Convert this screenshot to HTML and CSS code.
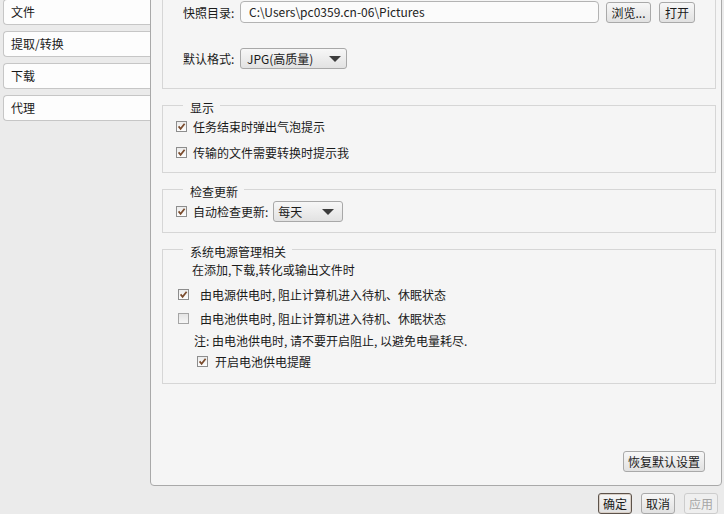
FILE: index.html
```html
<!DOCTYPE html>
<html>
<head>
<meta charset="UTF-8">
<title>设置</title>
<link rel="stylesheet" href="styles.css">
</head>
<body>
<div class="window">
    <ul class="tabs">
        <li>文件</li>
        <li>提取/转换</li>
        <li>下载</li>
        <li>代理</li>
    </ul>
    <div class="panel">
        <fieldset class="group files">
            <div class="row">
                <span class="label">快照目录:</span>
                <span class="input">C:\Users\pc0359.cn-06\Pictures</span>
                <button class="btn browse">浏览...</button>
                <button class="btn open">打开</button>
            </div>
            <div class="row row-format">
                <span class="label">默认格式:</span>
                <span class="select fmt">JPG(高质量)<i class="arrow"></i></span>
            </div>
        </fieldset>

        <fieldset class="group">
            <legend>显示</legend>
            <label class="check"><span class="cb"><svg viewBox="0 0 9 9" width="9" height="9"><path d="M1.6 4.4 L3.6 6.8 L7.6 1.8"/></svg></span>任务结束时弹出气泡提示</label>
            <label class="check second"><span class="cb"><svg viewBox="0 0 9 9" width="9" height="9"><path d="M1.6 4.4 L3.6 6.8 L7.6 1.8"/></svg></span>传输的文件需要转换时提示我</label>
        </fieldset>

        <fieldset class="group">
            <legend>检查更新</legend>
            <div class="check update">
                <span class="cb"><svg viewBox="0 0 9 9" width="9" height="9"><path d="M1.6 4.4 L3.6 6.8 L7.6 1.8"/></svg></span>
                <span>自动检查更新:</span>
                <span class="select freq">每天<i class="arrow"></i></span>
            </div>
        </fieldset>

        <fieldset class="group power">
            <legend>系统电源管理相关</legend>
            <div class="line intro">在添加,下载,转化或输出文件时</div>
            <label class="check ac"><span class="cb"><svg viewBox="0 0 9 9" width="9" height="9"><path d="M1.6 4.4 L3.6 6.8 L7.6 1.8"/></svg></span>由电源供电时, 阻止计算机进入待机、休眠状态</label>
            <label class="check battery"><span class="cb off"></span>由电池供电时, 阻止计算机进入待机、休眠状态</label>
            <div class="line note">注: 由电池供电时, 请不要开启阻止, 以避免电量耗尽.</div>
            <label class="check remind"><span class="cb"><svg viewBox="0 0 9 9" width="9" height="9"><path d="M1.6 4.4 L3.6 6.8 L7.6 1.8"/></svg></span>开启电池供电提醒</label>
        </fieldset>

        <div class="panel-foot">
            <button class="btn restore">恢复默认设置</button>
        </div>
    </div>
</div>
<div class="footer">
    <button class="btn default">确定</button>
    <button class="btn">取消</button>
    <button class="btn" disabled>应用</button>
</div>
</body>
</html>
```

FILE: styles.css
```css
*{
    box-sizing: border-box;
}
body{
    margin: 0;
    width: 724px;
    height: 514px;
    overflow: hidden;
    background: #ebebeb;
    font: 12px "Noto Sans CJK SC", sans-serif;
    color: #1a1a1a;
}
.window{
    display: flex;
    height: 486px;
}

/* left tab list */
.tabs{
    list-style: none;
    margin: -1px 0 0 3px;
    padding: 0;
    width: 147px;
}
.tabs li{
    height: 26px;
    line-height: 24px;
    margin-bottom: 6px;
    padding-left: 7px;
    background: #fdfdfd;
    border: 1px solid #c6c6c6;
    border-right: 0;
    border-radius: 4px 0 0 4px;
}

/* right page */
.panel{
    flex: 1;
    margin: -20px 2px 0 0;
    padding: 7px 5px 0 11px;
    background: #f5f5f5;
    border: 1px solid #a9a9a9;
    border-radius: 0 0 4px 4px;
    display: flex;
    flex-direction: column;
}
.group{
    margin: 7px 0 0;
    padding: 1px 0 10px 13px;
    min-width: 0;
    border: 1px solid #d6d6d6;
}
.group legend{
    margin-left: 7px;
    padding: 5px 6px 0 7px;
    line-height: 14px;
}
.group.files{
    margin-top: 0;
    padding: 12px 20px 19px 20px;
}
.row{
    display: flex;
    align-items: center;
    height: 22px;
}
.row-format{
    margin-top: 24px;
}
.label{
    width: 57px;
    flex: none;
}
.input{
    flex: 1;
    height: 22px;
    line-height: 20px;
    padding-left: 8px;
    margin-right: 7px;
    background: #fbfbfb;
    border: 1px solid #b3b3b3;
    border-radius: 4px;
    color: #222;
}
.select{
    position: relative;
    height: 21px;
    line-height: 19px;
    padding-left: 6px;
    background: linear-gradient(#f7f7f7, #e2e2e2);
    border: 1px solid #a8a8a8;
    border-radius: 3px;
}
.select.fmt{
    width: 107px;
}
.select.freq{
    width: 70px;
    margin-left: 5px;
    padding-left: 4px;
}
.arrow{
    position: absolute;
    top: 7px;
    right: 5px;
    border-left: 6px solid transparent;
    border-right: 6px solid transparent;
    border-top: 6px solid #3c3c3c;
}
.select.freq .arrow{
    right: 8px;
}

/* checkboxes */
.check{
    display: flex;
    align-items: center;
    height: 20px;
}
.check.second{
    margin-top: 6px;
}
.check.update{
    height: 22px;
}
.cb{
    width: 11px;
    height: 11px;
    flex: none;
    margin-right: 6px;
    border: 1px solid #8d8d8d;
    background: linear-gradient(#ececec, #fdfdfd);
    display: flex;
}
.cb svg{
    fill: none;
    stroke: #7a4b2c;
    stroke-width: 1.7;
}
.cb.off{
    border-color: #a5a5a5;
    background: linear-gradient(#e4e4e4, #f6f6f6);
}

/* power group */
.group.power{
    padding-bottom: 12px;
}
.line{
    height: 20px;
    line-height: 20px;
}
.intro{
    padding-left: 16px;
}
.check.ac{
    margin: 4px 0 0 2px;
}
.check.battery{
    margin: 4px 0 0 2px;
}
.check.ac .cb, .check.battery .cb{
    margin-right: 11px;
}
.note{
    margin-top: 3px;
    padding-left: 18px;
}
.check.remind{
    padding-left: 21px;
}
.check.remind .cb{
    margin-right: 7px;
}

/* buttons */
.btn{
    height: 21px;
    padding: 0;
    font: inherit;
    line-height: 19px;
    color: #1a1a1a;
    background: linear-gradient(#f7f7f7, #e1e1e1);
    border: 1px solid #a9a9a9;
    border-radius: 3px;
}
.browse{
    width: 45px;
    margin-right: 8px;
}
.open{
    width: 36px;
}
.panel-foot{
    margin-top: auto;
    padding: 0 11px 13px 0;
    display: flex;
    justify-content: flex-end;
}
.restore{
    width: 82px;
}
.footer{
    display: flex;
    justify-content: flex-end;
    gap: 9px;
    padding: 7px 6px 0;
}
.footer .btn{
    width: 34px;
}
.btn.default{
    border-color: #5d534b;
    box-shadow: inset 0 0 0 1px #d9cfc6;
}
.btn:disabled{
    color: #a6a6a6;
    border-color: #cdcdcd;
    background: #efefef;
}
```
